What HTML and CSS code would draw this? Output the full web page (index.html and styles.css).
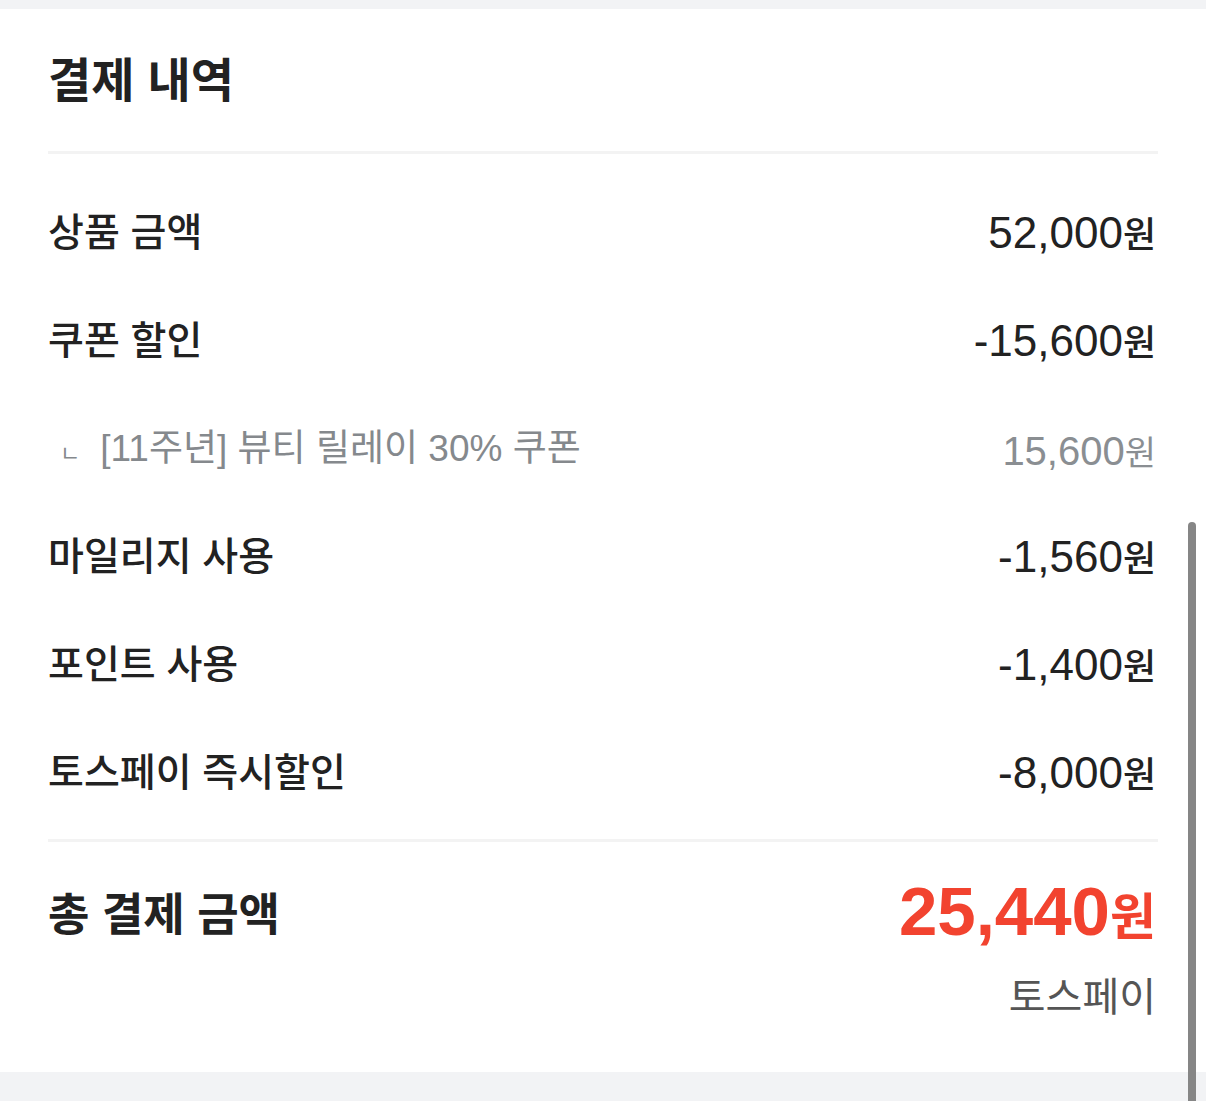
FILE: index.html
```html
<!DOCTYPE html>
<html lang="ko">
<head>
    <meta charset="UTF-8">
    <meta name="viewport" content="width=device-width, initial-scale=1.0">
    <title>결제 내역</title>
    <link rel="stylesheet" href="styles.css">
</head>
<body>
    <div class="top-gap"></div>
    <div class="card">
        <h2 class="title">결제 내역</h2>
        <div class="rows">
            <div class="row"><span class="label">상품 금액</span><span class="value">52,000<span class="won">원</span></span></div>
            <div class="row"><span class="label">쿠폰 할인</span><span class="value">-15,600<span class="won">원</span></span></div>
            <div class="row sub"><span class="label"><span class="mark">ㄴ</span>[11주년] 뷰티 릴레이 30% 쿠폰</span><span class="value">15,600<span class="won">원</span></span></div>
            <div class="row"><span class="label">마일리지 사용</span><span class="value">-1,560<span class="won">원</span></span></div>
            <div class="row"><span class="label">포인트 사용</span><span class="value">-1,400<span class="won">원</span></span></div>
            <div class="row"><span class="label">토스페이 즉시할인</span><span class="value">-8,000<span class="won">원</span></span></div>
        </div>
        <div class="total">
            <div class="row total-row"><span class="label">총 결제 금액</span><span class="value">25,440<span class="won">원</span></span></div>
            <div class="method">토스페이</div>
        </div>
    </div>
    <div class="bottom-gap"></div>
    <div class="scrollbar"></div>
</body>
</html>
```

FILE: styles.css
```css
body {
    font-family: "Liberation Sans", "Noto Sans CJK KR", sans-serif;
    margin: 0;
    padding: 0;
    background-color: #f2f3f5;
    color: #222;
    height: 1101px;
    overflow: hidden;
    position: relative;
}
.top-gap {
    height: 9px;
}
.card {
    background-color: #fff;
    padding: 0 48px;
    height: 1063px;
    box-sizing: border-box;
}
.title {
    margin: 0;
    padding-top: 44px;
    height: 145px;
    font-size: 47px;
    font-weight: 700;
    line-height: 56px;
    box-sizing: border-box;
    border-bottom: 3px solid #f3f3f3;
}
.rows {
    padding-top: 21px;
    padding-bottom: 16px;
    border-bottom: 3px solid #f3f3f3;
}
.row {
    display: flex;
    justify-content: space-between;
    align-items: center;
    height: 108px;
    font-size: 39px;
    font-weight: 500;
}
.row .value {
    font-size: 44px;
    font-weight: 400;
    padding-right: 2px;
    padding-top: 6px;
}
.won {
    font-size: 36px;
    font-weight: 500;
}
.sub {
    color: #85898d;
    font-size: 37px;
    font-weight: 400;
}
.sub .value {
    font-size: 40px;
    color: #8a8e92;
    padding-top: 10px;
}
.sub .won {
    font-size: 34px;
    font-weight: 400;
}
.mark {
    font-size: 22px;
    margin: 0 20px 0 12px;
}
.total {
    padding-top: 19px;
}
.total-row {
    height: 100px;
}
.total-row .label {
    font-size: 45px;
    font-weight: 700;
}
.total-row .value {
    font-size: 69px;
    font-weight: 700;
    color: #f2432f;
    padding-top: 0;
}
.total-row .won {
    font-size: 50px;
    font-weight: 700;
}
.method {
    text-align: right;
    padding-right: 2px;
    font-size: 40px;
    color: #555;
    margin-top: 4px;
}
.scrollbar {
    position: absolute;
    right: 10px;
    top: 522px;
    width: 8px;
    height: 600px;
    border-radius: 4px;
    background-color: #868686;
}
```
